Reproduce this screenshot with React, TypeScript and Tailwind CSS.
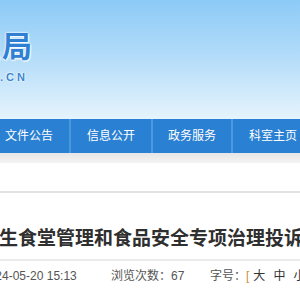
const NAV = [
  { label: "文件公告", w: "w-[82px]" },
  { label: "信息公开", w: "w-[82px]" },
  { label: "政务服务", w: "w-[80px]" },
  { label: "科室主页", w: "w-[82px]" },
];

const font = "font-['Liberation_Sans','Noto_Sans_CJK_SC',sans-serif]";

export default function App() {
  return (
    <div className={`w-[300px] h-[300px] overflow-hidden bg-white ${font}`}>
      {/* header banner */}
      <div className="h-[119px] bg-gradient-to-b from-[#8ccaf6] via-[#b5ddf9] to-[#e6f4fd] overflow-hidden">
        <div className="flex justify-end w-[34px] pt-[30px]">
          <span className="whitespace-nowrap text-[30px] leading-[34px] font-bold tracking-[2px] text-[#2f7fd2] [text-shadow:0_0_2px_#fff,0_0_2px_#fff,1px_1px_2px_#fff]">
            管理局
          </span>
        </div>
        <div className="flex justify-end w-[28px] mt-[7px]">
          <span className="whitespace-nowrap text-[11px] leading-[12px] font-bold tracking-[3px] text-[#3c86cf] [text-shadow:0_0_2px_#fff,0_0_2px_#fff]">
            GOV.CN
          </span>
        </div>
      </div>

      {/* nav */}
      <div className="h-[34px] bg-[#2a80d2] flex ml-[-11px]">
        {NAV.map((item) => (
          <div
            key={item.label}
            className={`${item.w} shrink-0 flex items-center justify-center border-r-2 border-[#4a98df] text-white text-[12px]`}
          >
            {item.label}
          </div>
        ))}
      </div>
      <div className="h-[10px] bg-gradient-to-b from-[#e6e6e6] to-[#f4f4f4]" />

      <div className="h-[30px] border-b-2 border-[#e2e2e2]" />

      {/* title */}
      <div className="pt-[34px] h-[68px] border-b-2 border-[#ebebeb] overflow-hidden">
        <h1 className="whitespace-nowrap ml-[-1px] text-[19px] leading-[24px] font-bold text-[#2f2f2f]">
          生食堂管理和食品安全专项治理投诉举报工作的通知
        </h1>
      </div>

      {/* meta */}
      <div className="flex items-center h-[30px] text-[12px] text-[#555] whitespace-nowrap">
        <span className="ml-[-18px] w-[129px] shrink-0">2024-05-20 15:13</span>
        <span className="w-[99px] shrink-0">浏览次数：67</span>
        <span className="shrink-0">字号：</span>
        <span className="text-[#c8903c]">[</span>
        <span className="ml-[4px] text-[#333]">大</span>
        <span className="ml-[8px] text-[#333]">中</span>
        <span className="ml-[8px] text-[#333]">小</span>
        <span className="text-[#c8903c] ml-[3px]">]</span>
      </div>
    </div>
  );
}
